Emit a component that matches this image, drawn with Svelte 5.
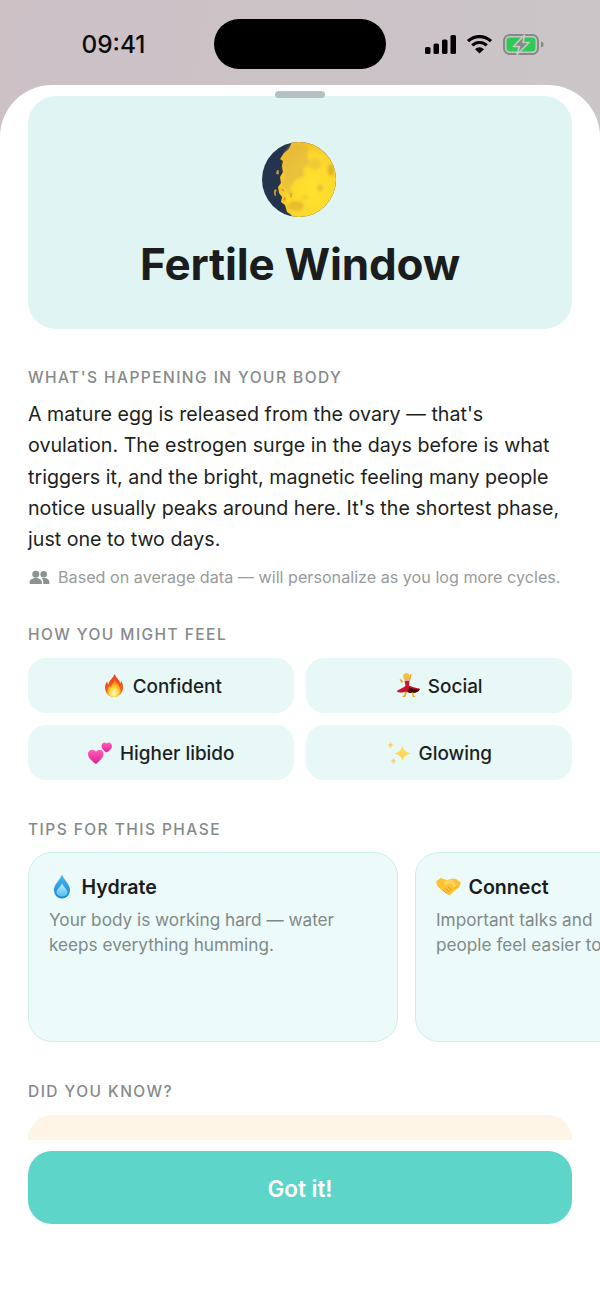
<script>
  const body = "A mature egg is released from the ovary — that's ovulation. The estrogen surge in the days before is what triggers it, and the bright, magnetic feeling many people notice usually peaks around here. It's the shortest phase, just one to two days."
</script>

<div class="phone">
  <div class="status">
    <span class="time">09:41</span>
    <div class="island"></div>
    <div class="indicators">
      <svg width="31" height="19" viewBox="0 0 31 19">
        <rect x="0" y="12" width="5.5" height="7" rx="1.6" fill="#000" />
        <rect x="8.5" y="8.5" width="5.5" height="10.5" rx="1.6" fill="#000" />
        <rect x="17" y="4.5" width="5.5" height="14.5" rx="1.6" fill="#000" />
        <rect x="25.5" y="0" width="5.5" height="19" rx="1.6" fill="#000" />
      </svg>
      <svg width="27" height="20" viewBox="0 0 27 20">
        <path d="M2 7.2a16.5 16.5 0 0 1 23 0M6.3 11.4a10.4 10.4 0 0 1 14.4 0" fill="none" stroke="#000" stroke-width="3.2" />
        <path d="M13.5 19.6 9 15.2a6.4 6.4 0 0 1 9 0z" fill="#000" />
      </svg>
      <svg width="41" height="21" viewBox="0 0 41 21">
        <rect x="1" y="1" width="34" height="19" rx="5.5" fill="none" stroke="#868a88" stroke-width="2" />
        <rect x="3.5" y="3.5" width="29" height="14" rx="3.4" fill="#2fca55" />
        <path d="M38 7.5c1.8.4 2.600 1.500 2.600 3s-.8 2.600-2.600 3z" fill="#868a88" />
        <path d="M21.5 1 10.500 12.500h6l-2.500 8L26 8.500h-6z" fill="#868a88" stroke="#cbc8c8" stroke-width="1.600" stroke-linejoin="round" />
      </svg>
    </div>
  </div>

  <div class="sheet">
    <div class="handle"></div>
    <div class="scroll">
      <div class="hero">
        <svg class="moon" width="74" height="75" viewBox="0 0 74 75">
          <defs>
            <radialGradient id="moonFill" cx="0.6" cy="0.62" r="0.62">
              <stop offset="0" stop-color="#ffe22f" />
              <stop offset="0.72" stop-color="#fdd82c" />
              <stop offset="1" stop-color="#f5c020" />
            </radialGradient>
            <clipPath id="moonClip"><ellipse cx="37" cy="37.500" rx="37" ry="37.500" /></clipPath>
            <filter id="soft"><feGaussianBlur stdDeviation="1.600" /></filter>
          </defs>
          <ellipse cx="37" cy="37.500" rx="37" ry="37.500" fill="#24344f" />
          <g clip-path="url(#moonClip)">
            <path d="M30 0h44v75H31l-3-3-3-2-2-7-4-3 1-5-3-4-1-6 3-4-1-6 3-5-1-6 1-5-3-2 4-6 5-4z" fill="url(#moonFill)" />
            <g filter="url(#soft)">
              <path d="M30 2c8-1 14 1 17 4l-2 8 3 8-7 4 1 8-9 4-5 8 3 7-3 1-5-7-3-7 3-5-2-10 1-8 1-6 4-5z" fill="#e2b943" opacity=".72" />
              <ellipse cx="53" cy="22" rx="6" ry="6" fill="#ecc33a" opacity=".7" />
              <ellipse cx="69" cy="28" rx="3.500" ry="6" fill="#d9a923" opacity=".75" />
              <ellipse cx="58" cy="46" rx="3" ry="3" fill="#e3b52c" opacity=".8" />
              <ellipse cx="34" cy="64" rx="8" ry="5" fill="#e0b22e" opacity=".75" />
              <ellipse cx="43" cy="55" rx="3" ry="2" fill="#e6bb35" opacity=".6" />
            </g>
          </g>
          <path d="M15 28l2 .5-.3 4-2.700-.5zM13 47c-1.500 2-1.500 4.500 0 7l1.300-.6c-.9-2-.7-3.400.6-5.400zM22 55l1.800 1-.5 3-1.900-1zM29 51l1 .4-.6 4-1.200-.5zM20 46l2 2-.5 2-2-2z" fill="#c79a36" />
        </svg>
        <h1>Fertile Window</h1>
      </div>

      <section class="body-section">
        <h2>WHAT'S HAPPENING IN YOUR BODY</h2>
        <p class="copy">{body}</p>
        <div class="note">
          <svg width="21" height="15" viewBox="0 0 22 16">
            <circle cx="7" cy="4.500" r="3.700" fill="#8d9191" />
            <circle cx="15.500" cy="4.500" r="3.500" fill="#8d9191" />
            <path d="M.5 15v-2c0-2.800 3-4.500 6.500-4.500s6.500 1.700 6.500 4.500v2z" fill="#8d9191" />
            <path d="M15 15v-2.300c0-1.500-.6-2.800-1.800-3.800.7-.2 1.500-.4 2.300-.4 3 0 6 1.500 6 4.200V15z" fill="#8d9191" />
          </svg>
          <span>Based on average data — will personalize as you log more cycles.</span>
        </div>
      </section>

      <section class="feel-section">
        <h2>HOW YOU MIGHT FEEL</h2>
        <div class="chips">
          <div class="chip">
            <svg width="25" height="25" viewBox="0 0 25 25">
              <defs>
                <linearGradient id="fireOuter" x1="0" y1="0" x2="0" y2="1">
                  <stop offset="0" stop-color="#ee3f1c" />
                  <stop offset="0.7" stop-color="#f4601c" />
                  <stop offset="1" stop-color="#f88a1e" />
                </linearGradient>
                <radialGradient id="fireInner" cx="0.5" cy="0.78" r="0.62">
                  <stop offset="0" stop-color="#fffbe0" />
                  <stop offset="0.35" stop-color="#ffe95e" />
                  <stop offset="0.75" stop-color="#ffb322" />
                  <stop offset="1" stop-color="#fb8a1e" />
                </radialGradient>
              </defs>
              <g transform="translate(5 1) scale(.82 .92)">
                <path d="M12 0c1 4 5 6 7 10 .6-1 .7-2 .6-3 1.800 2.500 2.400 5 2.400 7.500C22 20.500 17 25 11 25S0 20.500 0 15c0-3 1.200-5 2.800-7 0 1.500.4 2.500 1.400 3.300C4.500 7 9.500 5 12 0z" fill="url(#fireOuter)" />
                <path d="M12 6c.5 3 7 6.500 7 12.500 0 4-3.500 6.500-8 6.500s-8-2.500-8-6.500c0-3 1.800-5 3-6 .2 1 .6 1.600 1.300 2C7.500 11 11 9.500 12 6z" fill="url(#fireInner)" />
              </g>
            </svg>
            <span>Confident</span>
          </div>
          <div class="chip">
            <svg width="25" height="25" viewBox="0 0 25 25">
              <g transform="translate(2 -1)">
                <path d="M4.500 11 2.500 7.500 4 7l2.500 3z" fill="#eda92e" />
                <path d="M11.500 7.500 13.500 2l1.200.4L13 9z" fill="#eda92e" />
                <path d="M6 4.500c0-2.200 1.700-3.500 3.500-3.500s3 1.300 3 3c0 1.500-.7 2.500-1.200 3.500-.5 1.500-2 1.500-3 1-1-.500-2.300-2-2.300-4z" fill="#f7c33c" />
                <circle cx="9.800" cy="6" r="2.100" fill="#f2b35a" />
                <path d="M7.500 9 12.500 8.500 12 14l2 3H6.500l2-3.500z" fill="#d3152f" />
                <path d="M8 14.500 .5 18.500c-.8.500-.5 1.200.3 1.500 3 .7 6 .9 8.200-.2 3.500 1 8 1.200 11 0 1.700-.7 3.200-1.800 2.700-3-.3-.7-1.200-.4-2.200-.6-2.500-.4-5-1.300-8.500-2.700z" fill="#c8122c" />
                <path d="M12.500 15.500c2 1 5.500 1.800 10 2.200-.7 2-3.500 3-6.500 3.300-2 .2-4.500-.2-5.500-1z" fill="#3a0b0d" />
                <path d="M8 20l-1 3.600-1.500.4v1h3l1.500-5zM14.500 20.500l1 3.500.2 1H18l.2-.9-1.300-.4-.8-3.600z" fill="#eda92e" />
              </g>
            </svg>
            <span>Social</span>
          </div>
          <div class="chip">
            <svg width="25" height="25" viewBox="0 0 25 25">
              <defs>
                <linearGradient id="pinkHeart" x1="0" y1="0" x2="0" y2="1">
                  <stop offset="0" stop-color="#ff5fb8" />
                  <stop offset="1" stop-color="#e01f94" />
                </linearGradient>
              </defs>
              <g transform="translate(0 2) scale(1 .96)">
                <path d="M8 23C2 18.500 0 15.500 0 12.500 0 9.800 2 8 4.200 8 5.800 8 7.200 8.800 8 10.200 8.800 8.800 10.200 8 11.800 8 14 8 15.500 9.800 15.500 12.500c0 3-2.500 6-7.500 10.500z" fill="url(#pinkHeart)" />
                <path d="M18.500 11C15.300 8.500 13.500 6.500 13.500 4.300 13.500 2 15 .5 16.500.5c.9 0 1.600.4 2 1.200.4-.8 1.100-1.200 2-1.200 1.800 0 3.500 1.500 3.500 3.800 0 2.200-2 4.200-5.500 6.700z" fill="url(#pinkHeart)" />
              </g>
            </svg>
            <span>Higher libido</span>
          </div>
          <div class="chip">
            <svg width="25" height="25" viewBox="0 0 25 25">
              <g transform="translate(1 1.500)">
                <path d="M15.500 4c.8 4 2.500 6.500 8.500 8-6 1.500-7.700 4-8.500 8-.8-4-2.500-6.500-8.500-8 6-1.500 7.700-4 8.500-8z" fill="#ffd85c" />
                <path d="M3.500 0c.3 2 1 3 3.500 3.600C4.500 4.200 3.800 5.200 3.500 7.200 3.200 5.200 2.500 4.200 0 3.600 2.500 3 3.200 2 3.500 0z" fill="#fbcf63" />
                <path d="M6.500 16c.3 2 1 3 3 3.500-2 .5-2.700 1.500-3 3.500-.3-2-1-3-3-3.500 2-.5 2.700-1.500 3-3.500z" fill="#fbcf63" />
              </g>
            </svg>
            <span>Glowing</span>
          </div>
        </div>
      </section>

      <section class="tips-section">
        <h2>TIPS FOR THIS PHASE</h2>
        <div class="tips">
          <div class="tip">
            <div class="tip-title">
              <svg width="25" height="25" viewBox="0 0 25 25">
                <defs>
                  <linearGradient id="drop" x1="0" y1="0" x2="0" y2="1">
                    <stop offset="0" stop-color="#4fb6ee" />
                    <stop offset="1" stop-color="#0e87d8" />
                  </linearGradient>
                  <linearGradient id="dropLight" x1="0" y1="0" x2="0" y2="1">
                    <stop offset="0" stop-color="#c4eefc" />
                    <stop offset="1" stop-color="#4fbef0" />
                  </linearGradient>
                </defs>
                <g transform="translate(4.500 .5)">
                  <path d="M8.500 0c1.500 5 8 9.500 8 15.500C16.500 20.300 13 24 8.500 24S.5 20.300.5 15.500C.5 9.500 7 5 8.500 0z" fill="url(#drop)" />
                  <path d="M8.500 9c1 3 5.500 5.500 5.500 9 0 2.400-2.500 4-5.500 4S3 20.400 3 18c0-3.500 4.500-6 5.500-9z" fill="url(#dropLight)" />
                </g>
              </svg>
              <span>Hydrate</span>
            </div>
            <p>Your body is working hard — water keeps everything humming.</p>
          </div>
          <div class="tip">
            <div class="tip-title">
              <svg width="25" height="25" viewBox="0 0 25 25">
                <g transform="translate(0 4)">
                  <path d="M0 3.500 4.500 0l6 2 3-.5 3-1L20 1l5 3.500-2 5-3.500 2.500-5 4.500c-1 .8-2.300.6-3.200-.2L5 11.500 1.500 8z" fill="#fcc234" />
                  <path d="M7.500 4 13 1.500l3.500.5 4.500 6.500-2 1.500-4.500-4.500-3.500 1.500c-1.500.5-3-.2-3.500-2.500z" fill="#fdd35b" />
                  <path d="M7 12l4 3.500M9.500 10.500l4 3.500M12 9l4 3.500M21 8.500l-2 1.500" stroke="#e3971f" stroke-width="1" fill="none" />
                </g>
              </svg>
              <span>Connect</span>
            </div>
            <p>Important talks and<br />people feel easier to</p>
          </div>
        </div>
      </section>

      <section class="fact-section">
        <h2>DID YOU KNOW?</h2>
        <div class="fact"></div>
      </section>
    </div>

    <div class="footer">
      <button>Got it!</button>
    </div>
  </div>
</div>

<style>
  :global(body) {
    margin: 0;
  }

  .phone {
    width: 600px;
    height: 1304px;
    display: flex;
    flex-direction: column;
    overflow: hidden;
    font-family: Inter, "Liberation Sans", sans-serif;
    background: linear-gradient(100deg, #cdc1c6 0%, #cbc3c7 50%, #cac8c8 100%);
  }

  .status {
    height: 85px;
    flex: none;
    display: grid;
    grid-template-columns: 214px 172px 214px;
    box-sizing: border-box;
    padding-top: 19px;
  }

  .time {
    padding-left: 13px;
    font-size: 24.4px;
    font-weight: 500;
    line-height: 50px;
    text-align: center;
    color: #0b0b0b;
  }

  .island {
    height: 50px;
    border-radius: 25px;
    background: #000;
  }

  .indicators {
    display: flex;
    align-items: center;
    gap: 10px;
    height: 50px;
    padding-left: 39px;
  }

  .sheet {
    flex: 1;
    min-height: 0;
    position: relative;
    display: flex;
    flex-direction: column;
    background: #fff;
    border-radius: 52px 52px 0 0;
  }

  .handle {
    position: absolute;
    top: 6px;
    left: 275px;
    width: 50px;
    height: 7px;
    border-radius: 4px;
    background: #b5c0c2;
  }

  .scroll {
    height: 1055px;
    flex: none;
    overflow: hidden;
    box-sizing: border-box;
    padding: 11px 28px 0;
  }

  .hero {
    height: 233px;
    box-sizing: border-box;
    padding-top: 46px;
    display: flex;
    flex-direction: column;
    align-items: center;
    border-radius: 28px;
    background: #e0f5f3;
  }

  .moon {
    display: block;
    margin-right: 2px;
  }

  h1 {
    margin: 19px 0 0;
    font-size: 44px;
    line-height: 56px;
    font-weight: 700;
    letter-spacing: -0.2px;
    color: #1a1c1e;
  }

  h2 {
    margin: 0;
    font-size: 15.5px;
    line-height: 20px;
    font-weight: 500;
    letter-spacing: 1.45px;
    color: #868a8a;
  }

  .body-section {
    margin-top: 39px;
  }

  .copy {
    margin: 11px 0 0;
    font-size: 19.66px;
    line-height: 31.25px;
    color: #1d1f21;
  }

  .note {
    margin-top: 11px;
    display: flex;
    align-items: center;
    gap: 8px;
    padding-left: 1px;
    font-size: 16.16px;
    line-height: 22px;
    color: #989b9b;
  }

  .feel-section {
    margin-top: 37px;
  }

  .chips {
    margin-top: 13px;
    display: grid;
    grid-template-columns: 1fr 1fr;
    gap: 12px;
  }

  .chip {
    height: 55px;
    display: flex;
    align-items: center;
    justify-content: center;
    gap: 7.5px;
    border-radius: 18px;
    background: #e8f8f7;
    font-size: 18.9px;
    font-weight: 500;
    color: #1d1f21;
  }

  .chip span {
    padding-top: 1px;
  }

  .tips-section {
    margin-top: 40px;
  }

  .tips {
    margin-top: 12px;
    display: flex;
    gap: 17.5px;
    width: 600px;
    overflow: hidden;
  }

  .tip {
    flex: 0 0 369.5px;
    height: 190px;
    box-sizing: border-box;
    padding: 19.5px 20px 0;
    border: 1.5px solid #c9f0ec;
    border-radius: 24px;
    background: #edfafa;
  }

  .tip-title {
    display: flex;
    align-items: center;
    gap: 7.5px;
    height: 28px;
    font-size: 19.6px;
    font-weight: 600;
    color: #1a1c1e;
  }

  .tip p {
    margin: 6px 0 0;
    font-size: 17.2px;
    line-height: 25px;
    color: #7f8a89;
  }

  .fact-section {
    margin-top: 40px;
  }

  .fact {
    margin-top: 13px;
    height: 60px;
    border-radius: 24px;
    background: #fff5e6;
  }

  .footer {
    padding: 11px 28px 0;
  }

  button {
    display: block;
    width: 100%;
    height: 73px;
    border: 0;
    padding: 2px 0 0;
    border-radius: 24px;
    background: #5dd5c8;
    font-family: inherit;
    font-size: 22.5px;
    font-weight: 600;
    color: #fff;
  }
</style>
